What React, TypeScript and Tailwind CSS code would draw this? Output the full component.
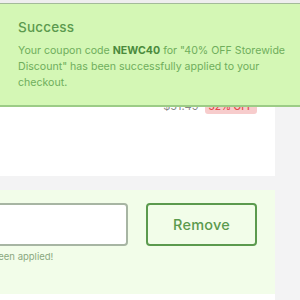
export default function App() {
  const font = { fontFamily: '"Inter", "Open Sans", sans-serif' };
  return (
    <div className="relative w-[300px] h-[300px] overflow-hidden bg-[#f3f3f4]" style={font}>
      {/* page content */}
      <div className="w-[275px] pt-[3px]">
        <div className="h-[173px] bg-white">
          <div className="flex items-center justify-end gap-[6px] pr-[18px] pt-[95px]">
            <span className="text-[11px] text-[#888] line-through">$51.49</span>
            <span className="rounded-[3px] bg-[#f7cccc] px-[4px] text-[10px] font-medium text-[#e04848]">32% OFF</span>
          </div>
        </div>
        <div className="mt-[14px] bg-[#f2fde9] pt-[13px] pb-[30px]">
          <div className="flex items-start gap-[18px]">
            <div className="-ml-[88px] flex w-[216px] flex-col">
              <div className="h-[43px] rounded-[4px] border-2 border-[#a7b5a3] bg-white" />
              <div className="mt-[4px] pl-[2px] text-[9.5px] text-[#8aa880]">Your coupon has been applied!</div>
            </div>
            <button className="h-[43px] w-[111px] rounded-[4px] border-2 border-[#5b9a4e] text-[14.5px] font-medium tracking-[0.2px] text-[#5b9a4e]">
              Remove
            </button>
          </div>
        </div>
        <div className="h-[12px] bg-white" />
      </div>

      {/* toast overlay */}
      <div className="absolute left-0 top-[3px] w-[300px] border-t border-b-2 border-t-[#a3bb99] border-b-[#9ccc86] bg-[#d4f7b5] pl-[18px] pr-[6px] pt-[13px] pb-[14px]">
        <div className="text-[13.5px] leading-[20px] font-medium tracking-[0.2px] text-[#5b9a4e]">Success</div>
        <p className="mt-[6px] text-[10.6px] leading-[16px] text-[#6fae5c]">
          Your coupon code <b className="font-bold text-[#4a8a3c]">NEWC40</b> for "40% OFF Storewide Discount" has been successfully applied to your checkout.
        </p>
      </div>
      <div className="absolute left-0 top-0 h-[3px] w-[300px] bg-[#eeeeee]" />
    </div>
  );
}
